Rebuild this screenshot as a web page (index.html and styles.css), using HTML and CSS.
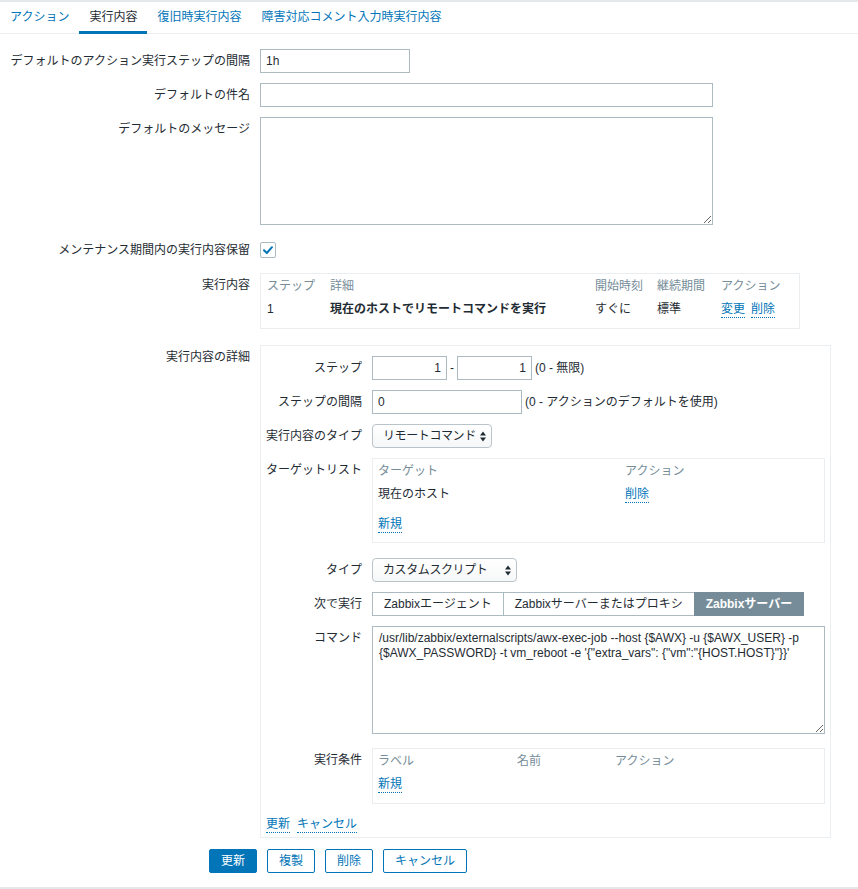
FILE: index.html
```html
<!DOCTYPE html>
<html lang="ja">
<head>
<meta charset="utf-8">
<title>アクション</title>
<link rel="stylesheet" href="styles.css">
</head>
<body>
<div class="page">
  <nav class="tabs">
    <a class="tab">アクション</a>
    <a class="tab active">実行内容</a>
    <a class="tab">復旧時実行内容</a>
    <a class="tab">障害対応コメント入力時実行内容</a>
  </nav>

  <form class="form">
    <div class="row">
      <label class="lbl">デフォルトのアクション実行ステップの間隔</label>
      <input class="txt w150" value="1h">
    </div>
    <div class="row">
      <label class="lbl">デフォルトの件名</label>
      <input class="txt w453" value="">
    </div>
    <div class="row">
      <label class="lbl">デフォルトのメッセージ</label>
      <textarea class="area"></textarea>
    </div>
    <div class="row row-check">
      <label class="lbl">メンテナンス期間内の実行内容保留</label>
      <div class="checkwrap">
        <span class="checkbox">
          <svg width="14" height="14" viewBox="0 0 14 14"><path d="M3 7.2 L5.8 10 L11 4.2" fill="none" stroke="#0275b8" stroke-width="2" stroke-linecap="round" stroke-linejoin="round"/></svg>
        </span>
      </div>
    </div>
    <div class="row row-ops">
      <label class="lbl">実行内容</label>
      <div class="box opsbox">
        <table class="tbl">
          <colgroup><col style="width:63px"><col style="width:265px"><col style="width:62px"><col style="width:64px"><col></colgroup>
          <thead><tr><th>ステップ</th><th>詳細</th><th>開始時刻</th><th>継続期間</th><th>アクション</th></tr></thead>
          <tbody><tr><td>1</td><td class="bold">現在のホストでリモートコマンドを実行</td><td>すぐに</td><td>標準</td><td><span class="links"><a class="link">変更</a><a class="link">削除</a></span></td></tr></tbody>
        </table>
      </div>
    </div>
    <div class="row row-detail">
      <label class="lbl">実行内容の詳細</label>
      <div class="detail">
        <div class="drow">
          <label class="dlbl">ステップ</label>
          <div class="inline">
            <input class="txt w75 right" value="1">
            <span class="dash">-</span>
            <input class="txt w75 right" value="1">
            <span class="hint">(0 - 無限)</span>
          </div>
        </div>
        <div class="drow">
          <label class="dlbl">ステップの間隔</label>
          <div class="inline">
            <input class="txt w150" value="0">
            <span class="hint">(0 - アクションのデフォルトを使用)</span>
          </div>
        </div>
        <div class="drow">
          <label class="dlbl">実行内容のタイプ</label>
          <div class="sel w120"><span class="seltext">リモートコマンド</span>
            <svg width="6" height="11" viewBox="0 0 6 11"><path d="M3 0.5 L6 4.5 H0 Z M3 10.5 L6 6.5 H0 Z" fill="#1f2c33"/></svg>
          </div>
        </div>
        <div class="drow row-target">
          <label class="dlbl">ターゲットリスト</label>
          <div class="box subbox">
            <table class="tbl">
              <colgroup><col style="width:247px"><col></colgroup>
              <thead><tr><th>ターゲット</th><th>アクション</th></tr></thead>
              <tbody>
                <tr><td>現在のホスト</td><td><span class="links"><a class="link">削除</a></span></td></tr>
                <tr class="newrow"><td colspan="2"><span class="links"><a class="link">新規</a></span></td></tr>
              </tbody>
            </table>
          </div>
        </div>
        <div class="drow">
          <label class="dlbl">タイプ</label>
          <div class="sel w145"><span class="seltext">カスタムスクリプト</span>
            <svg width="6" height="11" viewBox="0 0 6 11"><path d="M3 0.5 L6 4.5 H0 Z M3 10.5 L6 6.5 H0 Z" fill="#1f2c33"/></svg>
          </div>
        </div>
        <div class="drow">
          <label class="dlbl">次で実行</label>
          <div class="radios">
            <span class="radio">Zabbixエージェント</span>
            <span class="radio">Zabbixサーバーまたはプロキシ</span>
            <span class="radio on">Zabbixサーバー</span>
          </div>
        </div>
        <div class="drow row-cmd">
          <label class="dlbl">コマンド</label>
          <textarea class="area cmd">/usr/lib/zabbix/externalscripts/awx-exec-job --host {$AWX} -u {$AWX_USER} -p {$AWX_PASSWORD} -t vm_reboot -e '{"extra_vars": {"vm":"{HOST.HOST}"}}'</textarea>
        </div>
        <div class="drow row-cond">
          <label class="dlbl">実行条件</label>
          <div class="box subbox condbox">
            <table class="tbl">
              <colgroup><col style="width:139px"><col style="width:98px"><col></colgroup>
              <thead><tr><th>ラベル</th><th>名前</th><th>アクション</th></tr></thead>
              <tbody>
                <tr><td colspan="3"><span class="links"><a class="link">新規</a></span></td></tr>
              </tbody>
            </table>
          </div>
        </div>
        <div class="links dlinks"><a class="link">更新</a><a class="link">キャンセル</a></div>
      </div>
    </div>
    <div class="btns">
      <button type="button" class="btn primary">更新</button>
      <button type="button" class="btn">複製</button>
      <button type="button" class="btn">削除</button>
      <button type="button" class="btn">キャンセル</button>
    </div>
  </form>
  <div class="footline"></div>
</div>
</body>
</html>
```

FILE: styles.css
```css
html, body {
  margin: 0;
  padding: 0;
  background: #ffffff;
}
body {
  font-family: "Liberation Sans", Arial, "Noto Sans CJK JP", sans-serif;
  font-size: 12px;
  line-height: 1.2;
  color: #1f2c33;
}
.page {
  border-top: 2px solid #e4e8eb;
}

/* tabs */
.tabs {
  display: flex;
  height: 31px;
  border-bottom: 1px solid #ebeef0;
}
.tab {
  padding: 2px 10px 0;
  line-height: 27px;
  border-bottom: 3px solid transparent;
  margin-bottom: -1px;
  color: #0275b8;
  cursor: pointer;
  white-space: nowrap;
}
.tab.active {
  color: #1f2c33;
  border-bottom-color: #0275b8;
}

/* form */
.form {
  display: flex;
  flex-direction: column;
  padding-top: 15px;
}
.row {
  display: flex;
  align-items: flex-start;
  margin-bottom: 10px;
}
.lbl {
  flex: none;
  width: 250px;
  margin-right: 10px;
  text-align: right;
  line-height: 24px;
  white-space: nowrap;
}
.txt {
  display: block;
  box-sizing: border-box;
  height: 24px;
  margin: 0;
  padding: 0 5px;
  border: 1px solid #acbbc2;
  border-radius: 0;
  background: #ffffff;
  font: inherit;
  color: #1f2c33;
  outline: none;
}
.txt.right { text-align: right; }
.w75 { width: 75px; }
.w150 { width: 150px; }
.w453 { width: 453px; }
.area {
  display: block;
  box-sizing: border-box;
  width: 453px;
  height: 108px;
  margin: 0;
  padding: 4px 6px;
  border: 1px solid #acbbc2;
  border-radius: 0;
  font: inherit;
  line-height: 15px;
  color: #1f2c33;
  outline: none;
}
.row-check { margin-top: 3px; margin-bottom: 11px; }
.checkwrap {
  height: 24px;
  display: flex;
  align-items: center;
}
.checkbox {
  box-sizing: border-box;
  width: 16px;
  height: 16px;
  border: 1px solid #acbbc2;
  border-radius: 2px;
  display: flex;
  align-items: center;
  justify-content: center;
  background: #ffffff;
}
.row-ops { margin-bottom: 16px; }
.row-detail { margin-bottom: 11px; }

/* boxes and tables */
.box {
  box-sizing: border-box;
  border: 1px solid #ebeef0;
}
.opsbox {
  width: 540px;
  padding: 0 6px 8px;
}
.subbox {
  width: 453px;
  padding: 0 5px 7px;
}
.condbox { padding-bottom: 8px; }
.tbl {
  border-collapse: collapse;
  table-layout: fixed;
  width: 100%;
}
.tbl th, .tbl td {
  padding: 0;
  text-align: left;
  white-space: nowrap;
  vertical-align: middle;
}
.tbl th {
  height: 24px;
  font-weight: normal;
  color: #768d99;
}
.tbl td {
  height: 22px;
}
.tbl .newrow td {
  padding-top: 8px;
}
.bold { font-weight: bold; }

.links {
  display: inline-flex;
  gap: 6px;
  vertical-align: middle;
}
.link {
  display: inline-block;
  line-height: 16px;
  color: #0275b8;
  border-bottom: 1px dotted #0275b8;
  cursor: pointer;
}

/* detail panel */
.detail {
  box-sizing: border-box;
  width: 571px;
  border: 1px solid #ebeef0;
  padding: 10px 5px 4px;
}
.drow {
  display: flex;
  align-items: flex-start;
  margin-bottom: 10px;
}
.dlbl {
  flex: none;
  width: 96px;
  margin-right: 10px;
  text-align: right;
  line-height: 24px;
  white-space: nowrap;
}
.inline {
  display: flex;
  align-items: center;
}
.dash {
  padding: 0 3px;
  line-height: 24px;
}
.hint {
  margin-left: 3px;
  line-height: 24px;
  white-space: nowrap;
}
.sel {
  box-sizing: border-box;
  height: 24px;
  display: flex;
  align-items: center;
  justify-content: space-between;
  padding: 0 5px 0 10px;
  border: 1px solid #b9c4ca;
  border-radius: 4px;
  background: linear-gradient(#ffffff, #f6f7f8);
  white-space: nowrap;
}
.seltext { letter-spacing: -0.4px; }
.w120 { width: 120px; }
.w145 { width: 145px; }
.row-target { margin-bottom: 15px; }
.radios {
  display: flex;
  height: 24px;
}
.radio {
  box-sizing: border-box;
  height: 24px;
  line-height: 22px;
  padding: 0 11px;
  border: 1px solid #acbbc2;
  margin-left: -1px;
  white-space: nowrap;
  background: #ffffff;
}
.radio:first-child { margin-left: 0; }
.radio.on {
  background: #768d99;
  border-color: #768d99;
  color: #ffffff;
  font-weight: bold;
}
.cmd { height: 108px; }
.row-cmd { margin-bottom: 14px; }
.row-cond { margin-bottom: 12px; }
.dlinks {
  display: flex;
  gap: 7px;
}

/* buttons */
.btns {
  display: flex;
  gap: 10px;
  padding-left: 209px;
}
.btn {
  box-sizing: border-box;
  height: 24px;
  margin: 0;
  padding: 0 11px;
  border: 1px solid #0275b8;
  border-radius: 2px;
  background: #ffffff;
  color: #0275b8;
  font: inherit;
  line-height: 22px;
  cursor: pointer;
}
.btn.primary {
  background: #0275b8;
  color: #ffffff;
}
.footline {
  margin-top: 14px;
  height: 3px;
  background: #e4e8eb;
}
```
